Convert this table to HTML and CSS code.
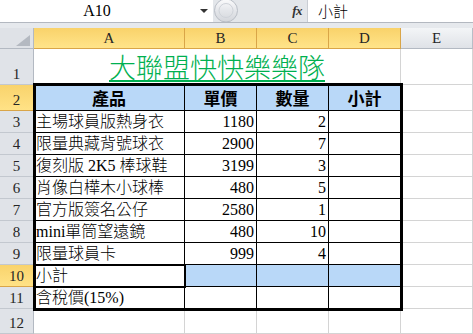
FILE: index.html
```html
<!DOCTYPE html>
<html>
<head>
<meta charset="utf-8">
<link rel="stylesheet" href="styles.css">
</head>
<body>
<div class="app">
  <div class="fbar">
    <div class="namebox"><span class="nb-text">A10</span><span class="nb-arrow"></span></div>
    <div class="fgrey">
      <svg class="knob" width="26" height="23" viewBox="0 0 26 23">
        <defs>
          <linearGradient id="kg" x1="0" y1="0" x2="0" y2="1">
            <stop offset="0" stop-color="#fbfbfc"/>
            <stop offset="0.5" stop-color="#e4e6ea"/>
            <stop offset="1" stop-color="#d3d6db"/>
          </linearGradient>
        </defs>
        <rect x="0" y="0" width="26" height="23" fill="#e3e6ea"/>
        <circle cx="13" cy="11.5" r="11.5" fill="url(#kg)" stroke="#b9bec6" stroke-width="1"/>
        <circle cx="13" cy="11.5" r="7" fill="none" stroke="#cfd3d9" stroke-width="1"/>
      </svg>
      <span class="fx">fx</span>
    </div>
    <div class="finput">小計</div>
  </div>
  <div class="strip"></div>
  <div class="grid">
    <!-- column headers -->
    <div class="corner"><span class="tri"></span></div>
    <div class="ch sel">A</div>
    <div class="ch sel">B</div>
    <div class="ch sel">C</div>
    <div class="ch sel">D</div>
    <div class="ch">E</div>

    <!-- row 1 -->
    <div class="rh">1</div>
    <div class="c title"><span class="title-text">大聯盟快快樂樂隊</span></div>
    <div class="c"></div>

    <!-- row 2 -->
    <div class="rh sel">2</div>
    <div class="c t hd">產品</div>
    <div class="c t hd">單價</div>
    <div class="c t hd">數量</div>
    <div class="c t hd">小計</div>
    <div class="c"></div>

    <!-- row 3 -->
    <div class="rh">3</div>
    <div class="c t">主場球員版熱身衣</div>
    <div class="c t num">1180</div>
    <div class="c t num">2</div>
    <div class="c t"></div>
    <div class="c"></div>

    <!-- row 4 -->
    <div class="rh">4</div>
    <div class="c t">限量典藏背號球衣</div>
    <div class="c t num">2900</div>
    <div class="c t num">7</div>
    <div class="c t"></div>
    <div class="c"></div>

    <!-- row 5 -->
    <div class="rh">5</div>
    <div class="c t">復刻版 2K5 棒球鞋</div>
    <div class="c t num">3199</div>
    <div class="c t num">3</div>
    <div class="c t"></div>
    <div class="c"></div>

    <!-- row 6 -->
    <div class="rh">6</div>
    <div class="c t">肖像白樺木小球棒</div>
    <div class="c t num">480</div>
    <div class="c t num">5</div>
    <div class="c t"></div>
    <div class="c"></div>

    <!-- row 7 -->
    <div class="rh">7</div>
    <div class="c t">官方版簽名公仔</div>
    <div class="c t num">2580</div>
    <div class="c t num">1</div>
    <div class="c t"></div>
    <div class="c"></div>

    <!-- row 8 -->
    <div class="rh">8</div>
    <div class="c t">mini單筒望遠鏡</div>
    <div class="c t num">480</div>
    <div class="c t num">10</div>
    <div class="c t"></div>
    <div class="c"></div>

    <!-- row 9 -->
    <div class="rh">9</div>
    <div class="c t">限量球員卡</div>
    <div class="c t num">999</div>
    <div class="c t num">4</div>
    <div class="c t"></div>
    <div class="c"></div>

    <!-- row 10 -->
    <div class="rh sel">10</div>
    <div class="c t">小計</div>
    <div class="c t blue"></div>
    <div class="c t blue"></div>
    <div class="c t blue"></div>
    <div class="c"></div>

    <!-- row 11 -->
    <div class="rh">11</div>
    <div class="c t">含稅價(15%)</div>
    <div class="c t"></div>
    <div class="c t"></div>
    <div class="c t"></div>
    <div class="c"></div>

    <!-- row 12 -->
    <div class="rh">12</div>
    <div class="c"></div>
    <div class="c"></div>
    <div class="c"></div>
    <div class="c"></div>
    <div class="c"></div>

    <!-- overlays: table outline and active-cell selection -->
    <div class="outline"></div>
    <div class="active"></div>
  </div>
</div>
</body>
</html>
```

FILE: styles.css
```css
html, body {
  margin: 0;
  padding: 0;
  background: #ffffff;
}

.app {
  width: 473px;
  height: 334px;
  overflow: hidden;
  font-family: "Liberation Serif", "Noto Sans CJK TC", serif;
  color: #000;
}

/* ---------- formula bar ---------- */
.fbar {
  display: flex;
  height: 23px;
  box-sizing: border-box;
  border-bottom: 1px solid #b3b8c0;
  background: #e3e6ea;
}

.namebox {
  width: 213px;
  background: #fff;
  display: flex;
  align-items: center;
}

.nb-text {
  flex: 1;
  text-align: center;
  font-size: 16px;
  padding-right: 6px;
}

.nb-arrow {
  width: 0;
  height: 0;
  border-left: 4px solid transparent;
  border-right: 4px solid transparent;
  border-top: 4px solid #333;
  margin-right: 5px;
}

.fgrey {
  width: 94px;
  display: flex;
  align-items: center;
}

.knob {
  display: block;
  margin-top: -1px;
}

.fx {
  margin-left: auto;
  margin-right: 5px;
  font-family: "Liberation Serif", serif;
  font-style: italic;
  font-weight: bold;
  font-size: 13px;
  color: #333;
  letter-spacing: -0.5px;
}

.finput {
  flex: 1;
  background: #fff;
  border-left: 1px solid #c9cdd3;
  font-family: "Noto Sans CJK TC", sans-serif;
  font-weight: 300;
  font-size: 15px;
  line-height: 22px;
  padding-left: 10px;
}

.strip {
  height: 5px;
  background: #e6e9ed;
}

/* ---------- grid ---------- */
.grid {
  position: relative;
  display: grid;
  grid-template-columns: 34px 151px 72px 72px 72px 72px;
  grid-template-rows: 21px 36px 26px repeat(9, 22px) 25px;
}

.grid > div {
  box-sizing: border-box;
}

.corner {
  background: #dfe2e7;
  border-right: 1px solid #b3b9c2;
  border-bottom: 1px solid #b3b9c2;
  position: relative;
}

.tri {
  position: absolute;
  right: 3px;
  bottom: 2px;
  width: 0;
  height: 0;
  border-left: 14px solid transparent;
  border-bottom: 11px solid #b4b9c1;
}

.ch {
  background: linear-gradient(#f3f5f7, #dfe2e7);
  border-right: 1px solid #b8bec7;
  border-bottom: 1px solid #b3b9c2;
  display: flex;
  align-items: center;
  justify-content: center;
  font-size: 15px;
  color: #262626;
}

.ch.sel {
  background: linear-gradient(#f9d26a, #ffe48a);
  border-right: 1px solid #d9a548;
  border-bottom: 1px solid #d9a548;
}

.rh {
  background: #e0e3e8;
  border-right: 1px solid #b3b9c2;
  border-bottom: 1px solid #c3c8cf;
  display: flex;
  align-items: flex-end;
  justify-content: center;
  font-size: 15px;
  line-height: 20px;
  color: #262626;
}

.rh.sel {
  background: linear-gradient(#f9d36c, #ffe286);
  border-right: 1px solid #d9a548;
  border-bottom: 1px solid #d9a548;
}

.c {
  border-right: 1px solid #d4d4d4;
  border-bottom: 1px solid #d4d4d4;
  display: flex;
  align-items: flex-end;
  font-size: 16px;
  font-weight: 300;
  line-height: 20px;
  padding-left: 2px;
  white-space: nowrap;
  overflow: hidden;
}

.c.t {
  border-right-color: #000;
  border-bottom-color: #000;
}

.c.num {
  justify-content: flex-end;
  padding-left: 0;
  padding-right: 2px;
}

.c.hd {
  background: #b9d8f8;
  justify-content: center;
  font-weight: bold;
  font-size: 17px;
  padding-left: 0;
}

.c.blue {
  background: #b9d8f8;
}

.title {
  grid-column: span 4;
  justify-content: center;
  padding-left: 0;
  overflow: visible;
}

.title-text {
  font-family: "Noto Sans CJK TC", sans-serif;
  font-size: 27px;
  line-height: 34px;
  color: #00b050;
  text-decoration: underline;
  text-decoration-thickness: 2px;
  text-underline-offset: 2px;
  font-weight: 300;
}

.outline {
  position: absolute;
  left: 33px;
  top: 55px;
  width: 370px;
  height: 228px;
  border: 3px solid #000;
  pointer-events: none;
  z-index: 2;
}

.active {
  position: absolute;
  left: 33px;
  top: 236px;
  width: 153px;
  height: 24px;
  border: 2px solid #000;
  pointer-events: none;
  z-index: 3;
}
```
